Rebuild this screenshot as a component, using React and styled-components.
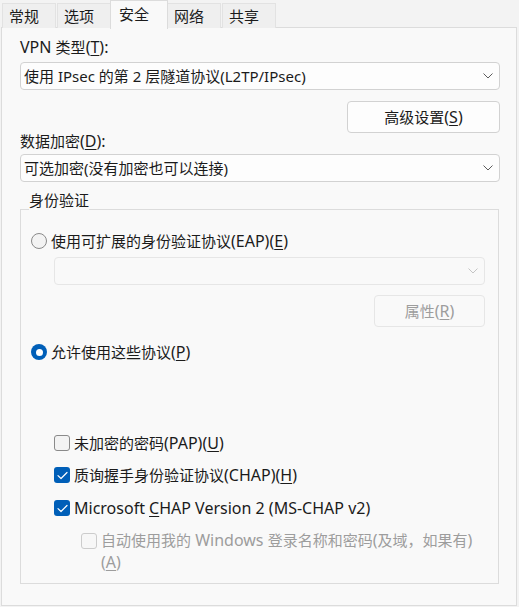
import React from "react";
import styled, { createGlobalStyle, css } from "styled-components";

const GlobalStyle = createGlobalStyle`
  html, body {
    margin: 0;
    padding: 0;
    background: #f3f3f3;
  }
  body {
    font-family: "Segoe UI", "Noto Sans", "Noto Sans CJK SC", sans-serif;
    font-size: 15px;
    color: #1b1b1b;
  }
`;

// Latin runs are drawn a bit larger, the way the UI font's Latin glyphs sit next to CJK
const Latin = styled.span`
  font-size: 16px;
`;

const CJK = /([\u3000-\u9fff\uff00-\uffef]+)/;

const mix = (str) =>
  str
    .split(CJK)
    .filter(Boolean)
    .map((part, i) => (CJK.test(part) ? part : <Latin key={i}>{part}</Latin>));

const Window = styled.div`
  width: 519px;
  height: 607px;
  display: flex;
  flex-direction: column;
  background: #f3f3f3;
  overflow: hidden;
`;

const TabBar = styled.div`
  height: 28px;
  display: flex;
  align-items: flex-end;
  padding-left: 2px;
  position: relative;
  z-index: 1;
`;

const Tab = styled.div`
  height: 25px;
  box-sizing: border-box;
  padding: 0 16px 0 6px;
  display: flex;
  align-items: center;
  background: #efefef;
  border: 1px solid #e2e2e2;
  border-bottom: none;
  margin-right: 1px;
  line-height: 20px;
  ${(p) =>
    p.$active &&
    css`
      height: 29px;
      margin: 0 -1px -1px -2px;
      padding: 0 18px 3px 8px;
      background: #f9f9f9;
      border-color: #dcdcdc;
      position: relative;
      z-index: 2;
    `}
`;

const Panel = styled.div`
  flex: 1;
  margin: -1px 2px 1px 1px;
  background: #f9f9f9;
  border: 1px solid #dcdcdc;
  padding: 9px 16px 0 18px;
  display: flex;
  flex-direction: column;
`;

const Label = styled.div`
  line-height: 20px;
  margin-top: ${(p) => p.$mt || 0}px;
`;

const Key = styled.span`
  font-size: 16px;
  text-decoration: underline;
  text-underline-offset: 2px;
  text-decoration-thickness: 1px;
`;

const Select = styled.div`
  height: 28px;
  box-sizing: border-box;
  margin-top: ${(p) => p.$mt || 0}px;
  margin-left: ${(p) => p.$ml || 0}px;
  border: 1px solid ${(p) => (p.$disabled ? "#e6e6e6" : "#d2d2d2")};
  border-radius: 4px;
  background: ${(p) => (p.$disabled ? "#f9f9f9" : "#fdfdfd")};
  display: flex;
  align-items: center;
  justify-content: space-between;
  padding: 0 6px 0 3px;
  line-height: 20px;
  white-space: nowrap;
`;

const Chevron = ({ disabled }) => (
  <svg width="10" height="6" viewBox="0 0 10 6">
    <polyline
      points="0.5,0.5 5,5 9.5,0.5"
      fill="none"
      stroke={disabled ? "#c4c4c4" : "#5c5c5c"}
      strokeWidth="1"
    />
  </svg>
);

const ButtonRow = styled.div`
  display: flex;
  justify-content: flex-end;
  margin-top: ${(p) => p.$mt || 0}px;
`;

const Button = styled.div`
  height: 32px;
  width: ${(p) => p.$w}px;
  box-sizing: border-box;
  border: 1px solid ${(p) => (p.$disabled ? "#e6e6e6" : "#d2d2d2")};
  border-radius: 4px;
  background: ${(p) => (p.$disabled ? "#f9f9f9" : "#fdfdfd")};
  color: ${(p) => (p.$disabled ? "#9d9d9d" : "#1b1b1b")};
  display: flex;
  align-items: center;
  justify-content: center;
  line-height: 20px;
`;

const GroupBox = styled.fieldset`
  margin: 8px 1px 0 0;
  padding: 3px 13px 10px 8px;
  border: 1px solid #dcdcdc;
  min-width: 0;
  display: flex;
  flex-direction: column;
`;

const Legend = styled.legend`
  padding: 0 0 18px 0;
  line-height: 20px;
`;

const OptionRow = styled.div`
  display: flex;
  align-items: center;
  height: 20px;
  line-height: 20px;
  gap: 4px;
  margin-top: ${(p) => p.$mt || 0}px;
  margin-left: ${(p) => p.$ml || 0}px;
  color: ${(p) => (p.$disabled ? "#9d9d9d" : "#1b1b1b")};
  white-space: nowrap;
`;

const WrapRow = styled.div`
  display: flex;
  align-items: flex-start;
  gap: 4px;
  line-height: 22px;
  margin-top: ${(p) => p.$mt || 0}px;
  margin-left: ${(p) => p.$ml || 0}px;
  color: #9d9d9d;
`;

const RadioDot = styled.span`
  width: 16px;
  height: 16px;
  box-sizing: border-box;
  border-radius: 50%;
  flex: none;
  margin-left: 2px;
  ${(p) =>
    p.$checked
      ? css`
          background: #005fb8;
          display: flex;
          align-items: center;
          justify-content: center;
          &::after {
            content: "";
            width: 7px;
            height: 7px;
            border-radius: 50%;
            background: #ffffff;
          }
        `
      : css`
          border: 1px solid #8a8a8a;
          background: #f3f3f3;
        `}
`;

const Box = styled.span`
  width: 16px;
  height: 16px;
  box-sizing: border-box;
  border-radius: 3px;
  flex: none;
  display: flex;
  align-items: center;
  justify-content: center;
  margin-top: ${(p) => p.$mt || 0}px;
  ${(p) =>
    p.$checked
      ? css`
          background: #005fb8;
        `
      : css`
          border: 1px solid ${p.$disabled ? "#cccccc" : "#8a8a8a"};
          background: ${p.$disabled ? "#f7f7f7" : "#f3f3f3"};
        `}
`;

const Check = () => (
  <svg width="11" height="9" viewBox="0 0 11 9">
    <polyline
      points="1,4.6 4,7.5 10,1.5"
      fill="none"
      stroke="#ffffff"
      strokeWidth="1.2"
      strokeLinecap="round"
      strokeLinejoin="round"
    />
  </svg>
);

const Checkbox = ({ checked, disabled, mt }) => (
  <Box $checked={checked} $disabled={disabled} $mt={mt}>
    {checked && <Check />}
  </Box>
);

const tabs = ["常规", "选项", "安全", "网络", "共享"];

export default function App() {
  return (
    <Window>
      <GlobalStyle />
      <TabBar>
        {tabs.map((t) => (
          <Tab key={t} $active={t === "安全"}>
            {t}
          </Tab>
        ))}
      </TabBar>
      <Panel>
        <Label>
          {mix("VPN 类型(")}
          <Key>T</Key>
          {mix("):")}
        </Label>
        <Select $mt={5}>
          <span>使用 IPsec 的第 2 层隧道协议(L2TP/IPsec)</span>
          <Chevron />
        </Select>
        <ButtonRow $mt={11}>
          <Button $w={153}>
            {mix("高级设置(")}
            <Key>S</Key>
            {mix(")")}
          </Button>
        </ButtonRow>
        <Label $mt={-2}>
          {mix("数据加密(")}
          <Key>D</Key>
          {mix("):")}
        </Label>
        <Select $mt={3}>
          <span>可选加密(没有加密也可以连接)</span>
          <Chevron />
        </Select>

        <GroupBox>
          <Legend>身份验证</Legend>
          <OptionRow>
            <RadioDot />
            <span>
              {mix("使用可扩展的身份验证协议(EAP)(")}
              <Key>E</Key>
              {mix(")")}
            </span>
          </OptionRow>
          <Select $mt={6} $ml={25} $disabled>
            <span />
            <Chevron disabled />
          </Select>
          <ButtonRow $mt={10}>
            <Button $w={111} $disabled>
              {mix("属性(")}
              <Key>R</Key>
              {mix(")")}
            </Button>
          </ButtonRow>
          <OptionRow $mt={15}>
            <RadioDot $checked />
            <span>
              {mix("允许使用这些协议(")}
              <Key>P</Key>
              {mix(")")}
            </span>
          </OptionRow>

          <OptionRow $mt={71} $ml={25}>
            <Checkbox />
            <span>
              {mix("未加密的密码(PAP)(")}
              <Key>U</Key>
              {mix(")")}
            </span>
          </OptionRow>
          <OptionRow $mt={12} $ml={25}>
            <Checkbox checked />
            <span>
              {mix("质询握手身份验证协议(CHAP)(")}
              <Key>H</Key>
              {mix(")")}
            </span>
          </OptionRow>
          <OptionRow $mt={13} $ml={25}>
            <Checkbox checked />
            <span>
              <Latin>Microsoft </Latin>
              <Key>C</Key>
              <Latin>HAP Version 2 (MS-CHAP v2)</Latin>
            </span>
          </OptionRow>
          <WrapRow $mt={11} $ml={52}>
            <Checkbox disabled mt={4} />
            <span>
              {mix("自动使用我的 Windows 登录名称和密码(及域，如果有)")}
              <br />
              {mix("(")}
              <Key>A</Key>
              {mix(")")}
            </span>
          </WrapRow>
        </GroupBox>
      </Panel>
    </Window>
  );
}
